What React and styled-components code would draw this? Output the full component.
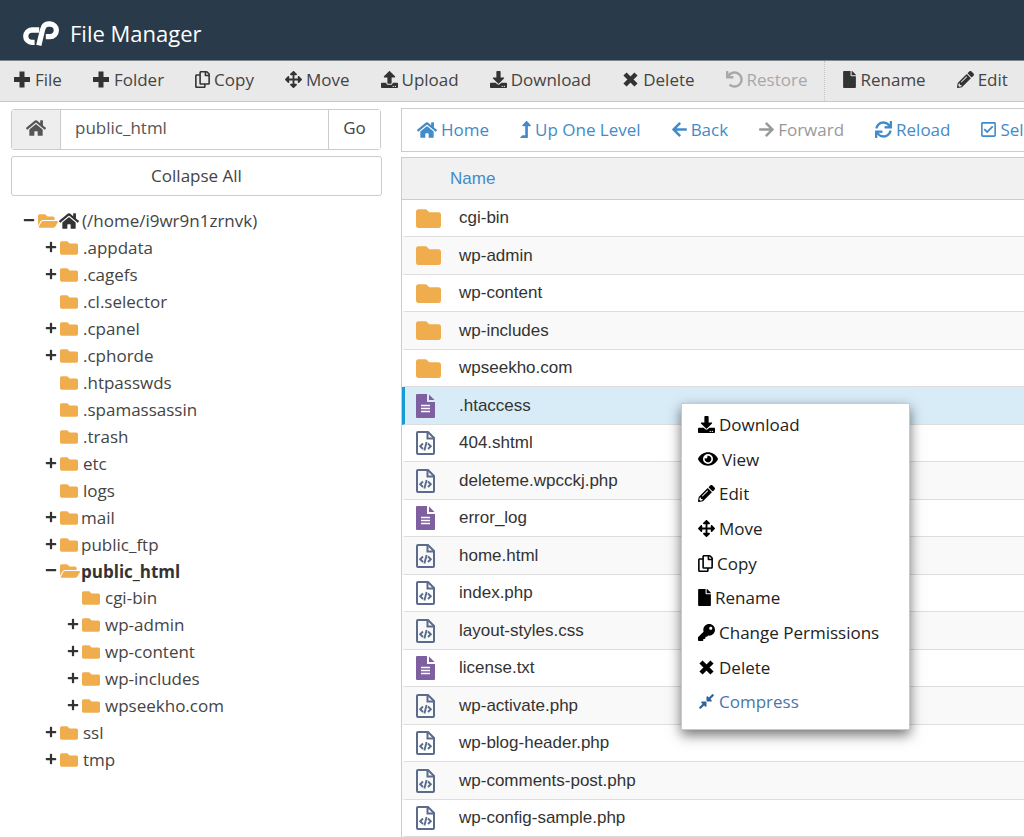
import React, { useState } from "react";
import styled, { createGlobalStyle } from "styled-components";
import {
  FaPlus,
  FaMinus,
  FaRegCopy,
  FaArrowsAlt,
  FaUpload,
  FaDownload,
  FaUndo,
  FaFile,
  FaPencilAlt,
  FaHome,
  FaLevelUpAlt,
  FaArrowLeft,
  FaArrowRight,
  FaSync,
  FaRegCheckSquare,
  FaFolder,
  FaFolderOpen,
  FaEye,
  FaKey,
  FaCompressAlt,
} from "react-icons/fa";

const GlobalStyle = createGlobalStyle`
  * {
    box-sizing: border-box;
  }

  body {
    margin: 0;
    overflow: hidden;
    background-color: #ffffff;
    color: #444444;
    font-family: "Open Sans", sans-serif;
    font-size: 17px;
  }

  button, input {
    font: inherit;
    color: inherit;
  }
`;

const Header = styled.header`
  display: flex;
  align-items: center;
  gap: 11px;
  height: 61px;
  padding: 5px 22px 0;
  background-color: #293a4a;
  border-bottom: 1px solid #7d858e;
`;

const Title = styled.h1`
  margin: 0;
  color: #ffffff;
  font-size: 22px;
  font-weight: 400;
`;

const Toolbar = styled.nav`
  display: flex;
  height: 41px;
  background-color: #e9e9e9;
  border-bottom: 1px solid #c8c8c8;
`;

const ToolButton = styled.button`
  display: flex;
  flex-shrink: 0;
  align-items: center;
  gap: 4px;
  padding: 0 17px 3px 14px;
  border: none;
  background: transparent;
  white-space: nowrap;
  cursor: pointer;

  svg {
    width: ${(props) => props.$iconWidth || 17}px;
    height: ${(props) => (props.$iconWidth === 20 ? 20 : 17)}px;
    color: #333333;
  }

  &:disabled,
  &:disabled svg {
    color: #a8a8a8;
    cursor: default;
  }
`;

const ToolDivider = styled.span`
  margin-right: 4px;
  border-left: 1px dotted #c4c4c4;
`;

const Main = styled.main`
  display: flex;
  gap: 19px;
  padding: 6px 0 0 11px;
`;

const Sidebar = styled.aside`
  flex: 0 0 371px;
`;

const PathForm = styled.form`
  display: flex;
  height: 41px;
  margin: 1px 1px 6px 0;
  border: 1px solid #cccccc;
  border-radius: 3px;
`;

const HomeButton = styled.button`
  width: 49px;
  padding: 2px 0 0;
  border: none;
  border-right: 1px solid #cccccc;
  background-color: #eeeeee;
  color: #555555;
  cursor: pointer;
`;

const PathInput = styled.input`
  flex: 1;
  min-width: 0;
  padding: 0 14px 4px;
  border: none;
  color: #555555;
  outline: none;
`;

const GoButton = styled.button`
  width: 52px;
  padding: 0 0 4px;
  border: none;
  border-left: 1px solid #cccccc;
  background-color: #ffffff;
  cursor: pointer;
`;

const CollapseButton = styled.button`
  width: 100%;
  height: 40px;
  padding: 0 0 2px;
  border: 1px solid #cccccc;
  border-radius: 3px;
  background-color: #ffffff;
  cursor: pointer;
`;

const TreeList = styled.ul`
  margin: ${(props) => (props.$root ? "11px 0 0 12px" : "0 0 0 22px")};
  padding: 0;
  list-style: none;
`;

const TreeRow = styled.div`
  display: flex;
  align-items: center;
  height: ${(props) => (props.$current ? 26 : 27)}px;
  color: ${(props) => (props.$current ? "#333333" : "inherit")};
  font-weight: ${(props) => (props.$current ? 700 : 400)};
  white-space: nowrap;
`;

const Toggle = styled.button`
  display: flex;
  width: 15px;
  height: 20px;
  padding: 3px 0 0;
  border: none;
  background: transparent;
  color: #333333;
  cursor: pointer;
`;

const TreeIcon = styled.span`
  display: flex;
  width: ${(props) => (props.$tight ? 21 : 23)}px;
  color: #f0ad4e;
`;

const TreeLink = styled.a`
  display: flex;
  align-items: center;
  gap: 3px;
  color: inherit;
  text-decoration: none;

  svg {
    color: #333333;
  }
`;

const Content = styled.section`
  flex: 1;
  min-width: 0;
`;

const ActionBar = styled.nav`
  display: flex;
  height: 44px;
  padding-left: 1px;
  margin-bottom: 5px;
  overflow: hidden;
  border: 1px solid #cccccc;
  border-right: none;
`;

const ActionButton = styled(ToolButton)`
  padding-bottom: 1px;
  color: #428bca;

  svg {
    color: #428bca;
  }

  &:disabled,
  &:disabled svg {
    color: #999999;
  }
`;

const FileTable = styled.table`
  width: 100%;
  border-collapse: separate;
  border-spacing: 0;
  border: 1px solid #cccccc;
  border-right: none;
  color: #333333;
  font-family: "Liberation Sans", Arial, sans-serif;
`;

const HeadCell = styled.th`
  height: 42px;
  padding: 0 0 0 48px;
  border-bottom: 1px solid #cccccc;
  background-color: #f1f1f1;
  color: #428bca;
  font-weight: 400;
  text-align: left;
`;

const FileRow = styled.tr`
  height: 37px;
  background-color: #ffffff;

  &:nth-child(even) {
    height: 38px;
    background-color: #f9f9f9;
  }

  &&[aria-selected="true"] {
    background-color: #d8ecf8;
  }

  &[aria-selected="true"] td:first-child {
    border-left-color: #179bd7;
  }
`;

const FileCell = styled.td`
  padding: 0;
  border-bottom: 1px solid #dddddd;
  white-space: nowrap;
`;

const IconCell = styled(FileCell)`
  width: 57px;
  padding-left: 11px;
  border-left: 3px solid transparent;

  svg {
    display: block;
  }
`;

const ContextMenu = styled.ul`
  position: absolute;
  top: 403px;
  left: 681px;
  width: 229px;
  margin: 0;
  padding: 3px 0 10px;
  list-style: none;
  background-color: #ffffff;
  border: 1px solid #ccccbb;
  box-shadow: 0 5px 12px rgba(0, 0, 0, 0.55);
`;

const MenuButton = styled.button`
  display: flex;
  align-items: center;
  gap: 4px;
  width: 100%;
  height: ${(props) => (props.$tall ? 35 : 34)}px;
  padding: 0 16px;
  border: none;
  background: transparent;
  color: ${(props) => (props.$active ? "#2f6399" : "#000000")};
  cursor: pointer;

  svg {
    width: ${(props) => props.$iconWidth || 17}px;
    height: ${(props) => (props.$iconWidth === 20 ? 20 : 17)}px;
  }
`;

const MenuLabel = styled.span`
  color: ${(props) => (props.$active ? "#4a76a8" : "#222222")};
`;

const CpanelLogo = () => (
  <svg width="37" height="26" viewBox="0 0 37 26" aria-hidden="true" fill="none" stroke="#fff">
    <path d="M17.200 10H9.900A6.150 6.150 0 0 0 9.900 22.300H12.600" strokeWidth="5.300" />
    <path
      d="M16.800 25.300L20.600 9.500Q22 4 26.500 4H28A6.350 6.350 0 0 1 28 16.700H23.800"
      strokeWidth="5.300"
    />
  </svg>
);

const AddIcon = () => (
  <svg viewBox="0 0 17 17" aria-hidden="true" fill="none" stroke="currentColor">
    <path d="M8 0.500V16.500M0 8.500H16" strokeWidth="5" />
  </svg>
);

const RemoveIcon = () => (
  <svg viewBox="0 0 17 17" aria-hidden="true" fill="none" stroke="currentColor">
    <path d="M3 3L14 14M14 3L3 14" strokeWidth="4.500" />
  </svg>
);

const DocumentIcon = () => (
  <svg width="19" height="24" viewBox="0 0 19 24" aria-label="Text file" role="img">
    <path d="M1 0H11V8H19V23a1 1 0 0 1-1 1H1a1 1 0 0 1-1-1V1a1 1 0 0 1 1-1Z" fill="#7e5fa0" />
    <path d="M13 0.500L18.500 6H13Z" fill="#7e5fa0" />
    <path d="M5 11.500h9M5 14.500h9M5 17.500h9" stroke="#fff" strokeWidth="1.500" />
  </svg>
);

const CodeIcon = () => (
  <svg width="19" height="24" viewBox="0 0 19 24" aria-label="Code file" role="img" fill="none" stroke="#5b6b8c">
    <path d="M2 1H12L18 7V22a1 1 0 0 1-1 1H2a1 1 0 0 1-1-1V2a1 1 0 0 1 1-1Z" strokeWidth="2" />
    <path d="M11.500 1V7.500H18" strokeWidth="2" />
    <path d="M7 12.500L4.200 15.200L7 18M12 12.500L14.800 15.200L12 18M10.600 11L8.400 19.500" strokeWidth="1.900" />
  </svg>
);

const tools = [
  { label: "File", icon: AddIcon },
  { label: "Folder", icon: AddIcon },
  { label: "Copy", icon: FaRegCopy, iconWidth: 15 },
  { label: "Move", icon: FaArrowsAlt },
  { label: "Upload", icon: FaUpload },
  { label: "Download", icon: FaDownload },
  { label: "Delete", icon: RemoveIcon },
  { label: "Restore", icon: FaUndo, disabled: true, divider: true },
  { label: "Rename", icon: FaFile, iconWidth: 13 },
  { label: "Edit", icon: FaPencilAlt },
];

const actions = [
  { label: "Home", icon: FaHome, iconWidth: 20 },
  { label: "Up One Level", icon: FaLevelUpAlt, iconWidth: 11 },
  { label: "Back", icon: FaArrowLeft, iconWidth: 15 },
  { label: "Forward", icon: FaArrowRight, disabled: true, iconWidth: 15 },
  { label: "Reload", icon: FaSync },
  { label: "Select All", icon: FaRegCheckSquare, iconWidth: 15 },
];

const menuItems = [
  { label: "Download", icon: FaDownload },
  { label: "View", icon: FaEye, iconWidth: 20 },
  { label: "Edit", icon: FaPencilAlt },
  { label: "Move", icon: FaArrowsAlt },
  { label: "Copy", icon: FaRegCopy, iconWidth: 15 },
  { label: "Rename", icon: FaFile, iconWidth: 13 },
  { label: "Change Permissions", icon: FaKey },
  { label: "Delete", icon: RemoveIcon },
  { label: "Compress", icon: FaCompressAlt, active: true },
];

const tree = [
  { name: ".appdata", closed: true },
  { name: ".cagefs", closed: true },
  { name: ".cl.selector" },
  { name: ".cpanel", closed: true },
  { name: ".cphorde", closed: true },
  { name: ".htpasswds" },
  { name: ".spamassassin" },
  { name: ".trash" },
  { name: "etc", closed: true },
  { name: "logs" },
  { name: "mail", closed: true, tight: true },
  { name: "public_ftp", closed: true, tight: true },
  {
    name: "public_html",
    current: true,
    tight: true,
    children: [
      { name: "cgi-bin" },
      { name: "wp-admin", closed: true },
      { name: "wp-content", closed: true },
      { name: "wp-includes", closed: true },
      { name: "wpseekho.com", closed: true },
    ],
  },
  { name: "ssl", closed: true },
  { name: "tmp", closed: true },
];

const files = [
  { name: "cgi-bin", type: "folder" },
  { name: "wp-admin", type: "folder" },
  { name: "wp-content", type: "folder" },
  { name: "wp-includes", type: "folder" },
  { name: "wpseekho.com", type: "folder" },
  { name: ".htaccess", type: "text" },
  { name: "404.shtml", type: "code" },
  { name: "deleteme.wpcckj.php", type: "code" },
  { name: "error_log", type: "text" },
  { name: "home.html", type: "code" },
  { name: "index.php", type: "code" },
  { name: "layout-styles.css", type: "code" },
  { name: "license.txt", type: "text" },
  { name: "wp-activate.php", type: "code" },
  { name: "wp-blog-header.php", type: "code" },
  { name: "wp-comments-post.php", type: "code" },
  { name: "wp-config-sample.php", type: "code" },
];

const fileIcons = {
  folder: <FaFolder size={25} color="#f0ad4e" />,
  text: <DocumentIcon />,
  code: <CodeIcon />,
};

const TreeNode = ({ node }) => (
  <li>
    <TreeRow $current={node.current}>
      <Toggle type="button" aria-label={`Toggle ${node.name}`}>
        {node.closed && <FaPlus size={12} />}
        {node.children && <FaMinus size={12} />}
      </Toggle>
      <TreeIcon $tight={node.tight}>
        {node.children ? <FaFolderOpen size={20} /> : <FaFolder size={18} />}
      </TreeIcon>
      <TreeLink href="#">
        {node.home && <FaHome size={20} />}
        {node.name}
      </TreeLink>
    </TreeRow>
    {node.children && (
      <TreeList>
        {node.children.map((child) => (
          <TreeNode key={child.name} node={child} />
        ))}
      </TreeList>
    )}
  </li>
);

const App = () => {
  const [path, setPath] = useState("public_html");
  const [selected, setSelected] = useState(".htaccess");

  return (
    <>
      <GlobalStyle />
      <Header>
        <CpanelLogo />
        <Title>File Manager</Title>
      </Header>

      <Toolbar>
        {tools.map(({ label, icon: Icon, iconWidth, disabled, divider }) => (
          <React.Fragment key={label}>
            <ToolButton type="button" disabled={disabled} $iconWidth={iconWidth}>
              <Icon />
              {label}
            </ToolButton>
            {divider && <ToolDivider />}
          </React.Fragment>
        ))}
      </Toolbar>

      <Main>
        <Sidebar>
          <PathForm onSubmit={(e) => e.preventDefault()}>
            <HomeButton type="button" aria-label="Home directory">
              <FaHome size={20} />
            </HomeButton>
            <PathInput
              type="text"
              aria-label="Path"
              value={path}
              onChange={(e) => setPath(e.target.value)}
            />
            <GoButton type="submit">Go</GoButton>
          </PathForm>
          <CollapseButton type="button">Collapse All</CollapseButton>
          <TreeList $root>
            <TreeNode
              node={{
                name: "(/home/i9wr9n1zrnvk)",
                home: true,
                tight: true,
                children: tree,
              }}
            />
          </TreeList>
        </Sidebar>

        <Content>
          <ActionBar>
            {actions.map(({ label, icon: Icon, iconWidth, disabled }) => (
              <ActionButton
                key={label}
                type="button"
                disabled={disabled}
                $iconWidth={iconWidth}
              >
                <Icon />
                {label}
              </ActionButton>
            ))}
          </ActionBar>
          <FileTable>
            <thead>
              <tr>
                <HeadCell colSpan={2}>Name</HeadCell>
              </tr>
            </thead>
            <tbody>
              {files.map((file) => (
                <FileRow
                  key={file.name}
                  aria-selected={file.name === selected}
                  onClick={() => setSelected(file.name)}
                >
                  <IconCell>{fileIcons[file.type]}</IconCell>
                  <FileCell>{file.name}</FileCell>
                </FileRow>
              ))}
            </tbody>
          </FileTable>
        </Content>
      </Main>

      <ContextMenu>
        {menuItems.map(({ label, icon: Icon, iconWidth, active }, i) => (
          <li key={label}>
            <MenuButton
              type="button"
              $active={active}
              $tall={i % 3 !== 1}
              $iconWidth={iconWidth}
            >
              <Icon />
              <MenuLabel $active={active}>{label}</MenuLabel>
            </MenuButton>
          </li>
        ))}
      </ContextMenu>
    </>
  );
};

export default App;
